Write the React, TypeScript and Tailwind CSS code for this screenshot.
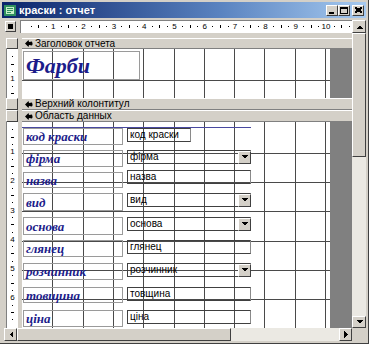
import React from 'react';

const CM = 30.3;
const ROW = 29.2;

type Ctl = { label: string; field: string; top: number; h: number; ttop: number; combo?: boolean; short?: boolean };

const controls: Ctl[] = [
  { label: 'код краски', field: 'код краски', top: 6, h: 17, ttop: 6, short: true },
  { label: 'фірма', field: 'фірма', top: 28, h: 17, ttop: 28, combo: true },
  { label: 'назва', field: 'назва', top: 50, h: 16, ttop: 48 },
  { label: 'вид', field: 'вид', top: 71, h: 18, ttop: 71, combo: true },
  { label: 'основа', field: 'основа', top: 95, h: 18, ttop: 95, combo: true },
  { label: 'глянец', field: 'глянец', top: 118, h: 17, ttop: 118 },
  { label: 'розчинник', field: 'розчинник', top: 141, h: 17, ttop: 141, combo: true },
  { label: 'товщина', field: 'товщина', top: 165, h: 16, ttop: 165 },
  { label: 'ціна', field: 'ціна', top: 188, h: 17, ttop: 188 },
];

const raised =
  'bg-[#d4d0c8] border-t border-l border-r border-b border-t-white border-l-white border-r-[#404040] border-b-[#404040]';

function Tri({ dir }: { dir: 'up' | 'down' | 'left' | 'right' }) {
  const pts = {
    up: '0,4 3.5,0.5 7,4',
    down: '0,0 7,0 3.5,3.5',
    left: '4,0 4,7 0.5,3.5',
    right: '0,0 0,7 3.5,3.5',
  }[dir];
  const vertical = dir === 'up' || dir === 'down';
  return (
    <svg width={vertical ? 7 : 4} height={vertical ? 4 : 7} shapeRendering="crispEdges">
      <polygon points={pts} fill="#000" />
    </svg>
  );
}

function ArrowBtn({ dir, className }: { dir: 'up' | 'down' | 'left' | 'right'; className: string }) {
  return (
    <div className={`${raised} flex items-center justify-center box-border ${className}`}>
      <Tri dir={dir} />
    </div>
  );
}

function CaptionBtn({ kind }: { kind: 'min' | 'max' | 'close' }) {
  return (
    <div className={`${raised} w-[12px] h-[11px] box-border flex items-center justify-center`}>
      {kind === 'min' && <div className="w-[5px] h-[2px] bg-black mt-[5px] -ml-[2px]" />}
      {kind === 'max' && <div className="w-[8px] h-[7px] border border-black border-t-2 box-border" />}
      {kind === 'close' && (
        <svg width="7" height="6" shapeRendering="crispEdges">
          <path d="M0 0 L7 6 M1 0 L7 5 M0 1 L6 6 M7 0 L0 6 M6 0 L0 5 M7 1 L1 6" stroke="#000" strokeWidth="1" fill="none" />
        </svg>
      )}
    </div>
  );
}

function TitleBar() {
  return (
    <div className="h-[16px] flex items-center bg-[linear-gradient(to_right,#0a246a,#5a83c0_60%,#a6caf0)] pl-[2px] pr-[2px]">
      <svg width="12" height="11" className="shrink-0">
        <rect x="0" y="0" width="12" height="11" fill="#2f8f5f" />
        <rect x="2" y="2" width="8" height="7" fill="#c8f0c8" />
        <rect x="3" y="3" width="6" height="1" fill="#2f8f5f" />
        <rect x="3" y="5" width="6" height="1" fill="#2f8f5f" />
        <rect x="3" y="7" width="4" height="1" fill="#2f8f5f" />
      </svg>
      <span className="ml-[3px] text-white font-bold text-[11px] leading-none font-['Liberation_Sans',Arial,sans-serif] whitespace-nowrap">
        краски : отчет
      </span>
      <div className="ml-auto flex items-center">
        <CaptionBtn kind="min" />
        <CaptionBtn kind="max" />
        <div className="w-[2px]" />
        <CaptionBtn kind="close" />
      </div>
    </div>
  );
}

function HRuler() {
  const items: React.ReactNode[] = [];
  for (let i = 0; i <= 10; i++) {
    const x = 2 + i * CM;
    if (i > 0)
      items.push(
        <span key={'n' + i} className="absolute top-[1px] -translate-x-1/2 text-[8px] leading-[9px]" style={{ left: x }}>
          {i}
        </span>
      );
    items.push(<span key={'a' + i} className="absolute top-[5px] w-[1px] h-[1px] bg-black" style={{ left: Math.round(x + CM * 0.25) }} />);
    items.push(<span key={'b' + i} className="absolute top-[4px] w-[1px] h-[3px] bg-black" style={{ left: Math.round(x + CM * 0.5) }} />);
    items.push(<span key={'c' + i} className="absolute top-[5px] w-[1px] h-[1px] bg-black" style={{ left: Math.round(x + CM * 0.75) }} />);
  }
  return (
    <div className="relative flex-1 h-[13px] bg-white border-t border-l border-[#808080] overflow-hidden font-['Liberation_Sans',Arial,sans-serif] text-black">
      {items}
    </div>
  );
}

function VRuler({ h, px, count }: { h: string; px: number; count: number }) {
  const items: React.ReactNode[] = [];
  for (let i = 0; i <= count; i++) {
    const y = i * ROW;
    if (i > 0 && y + 5 < px)
      items.push(
        <span key={'n' + i} className="absolute left-0 right-0 text-center -translate-y-1/2 text-[8px] leading-[9px]" style={{ top: y }}>
          {i}
        </span>
      );
    items.push(<span key={'a' + i} className="absolute left-[5px] w-[1px] h-[1px] bg-black" style={{ top: Math.round(y + ROW * 0.25) }} />);
    items.push(<span key={'b' + i} className="absolute left-[4px] w-[3px] h-[1px] bg-black" style={{ top: Math.round(y + ROW * 0.5) }} />);
    items.push(<span key={'c' + i} className="absolute left-[5px] w-[1px] h-[1px] bg-black" style={{ top: Math.round(y + ROW * 0.75) }} />);
  }
  return (
    <div className={`relative ${h} ml-[2px] w-[12px] bg-white border-l border-[#808080] overflow-hidden font-['Liberation_Sans',Arial,sans-serif] text-black`}>
      {items}
    </div>
  );
}

function Selector({ h }: { h: string }) {
  return <div className={`${raised} ${h} ml-[2px] w-[12px] box-border`} />;
}

function SectionBar({ title, h }: { title: string; h: string }) {
  return (
    <div className={`${h} box-border flex items-center bg-[#d4d0c8] border-t border-t-white border-b border-b-[#808080] pl-[3px]`}>
      <svg width="8" height="7" className="shrink-0">
        <path d="M0 3.5 L3.5 0 L4 2 L7 1.5 Q8 3.5 7 5.5 L4 5 L3.5 7 Z" fill="#000" />
      </svg>
      <span className="ml-[2px] text-[10px] leading-none text-black font-['Liberation_Sans',Arial,sans-serif] whitespace-nowrap">
        {title}
      </span>
    </div>
  );
}

function Grid({ height, rows }: { height: number; rows: number }) {
  const lines: React.ReactNode[] = [];
  for (let k = 1; k <= 10; k++) {
    lines.push(<div key={'v' + k} className="absolute top-0 bottom-0 w-[1px] bg-[#4a4a4a]" style={{ left: Math.round(k * CM) }} />);
  }
  for (let j = 0; j < rows; j++) {
    const t = Math.round(31 + j * ROW);
    if (t < height) lines.push(<div key={'h' + j} className="absolute left-0 right-0 h-[1px] bg-[#4a4a4a]" style={{ top: t }} />);
  }
  return <>{lines}</>;
}

function Label({ c }: { c: Ctl }) {
  return (
    <div
      className="absolute left-[1px] w-[100px] box-border border border-[#9a9a9a] flex items-center pl-[2px] text-[13px] leading-none font-bold italic text-[#1c1c8a] font-['Liberation_Serif','Times_New_Roman',serif] whitespace-nowrap"
      style={{ top: c.top, height: c.h }}
    >
      {c.label}
    </div>
  );
}

function Field({ c }: { c: Ctl }) {
  return (
    <div
      className={`absolute left-[105px] h-[14px] box-border border-t border-l border-b border-r border-t-[#404040] border-l-[#404040] border-b-[#404040] border-r-[#8a8a8a] flex items-center ${c.short ? 'w-[64px]' : 'w-[124px]'}`}
      style={{ top: c.ttop }}
    >
      <span className="pl-[2px] text-[10px] leading-none text-black font-['Liberation_Sans',Arial,sans-serif] whitespace-nowrap">
        {c.field}
      </span>
      {c.combo && <ArrowBtn dir="down" className="ml-auto w-[13px] h-[13px] -mr-[1px]" />}
    </div>
  );
}

export default function App() {
  return (
    <div className="w-[369px] h-[344px] box-border bg-[#d4d0c8] border-r border-b border-[#404040] pt-[2px] pl-[2px] pr-[2px] pb-[2px] flex flex-col">
      <TitleBar />
      <div className="h-[2px]" />

      <div className="h-[308px] flex pl-[2px]">
        <div className="flex-1 flex flex-col">
          {/* top ruler */}
          <div className="h-[13px] flex">
            <div className="w-[16px] flex">
              <div className={`${raised} ml-[1px] mt-[1px] w-[11px] h-[11px] box-border flex items-center justify-center`}>
                <div className="w-[5px] h-[5px] bg-black" />
              </div>
            </div>
            <HRuler />
          </div>
          <div className="h-[5px]" />

          {/* sections */}
          <div className="flex-1 flex">
            <div className="w-[18px] flex flex-col">
              <Selector h="h-[11px]" />
              <VRuler h="h-[49px]" px={49} count={1} />
              <Selector h="h-[12px]" />
              <Selector h="h-[12px]" />
              <VRuler h="h-[206px]" px={206} count={7} />
            </div>

            <div className="w-[330px] flex flex-col">
              <SectionBar title="Заголовок отчета" h="h-[11px]" />
              <div className="h-[49px] flex">
                <div className="relative w-[308px] bg-white overflow-hidden">
                  <Grid height={49} rows={1} />
                  <div className="absolute left-[1px] top-[2px] w-[117px] h-[29px] box-border border border-[#9a9a9a] flex items-center pl-[2px] text-[22px] leading-none font-bold italic text-[#1c1c8a] font-['Liberation_Serif','Times_New_Roman',serif]">
                    Фарби
                  </div>
                </div>
                <div className="flex-1 bg-[#808080]" />
              </div>
              <SectionBar title="Верхний колонтитул" h="h-[12px]" />
              <SectionBar title="Область данных" h="h-[12px]" />
              <div className="h-[206px] flex">
                <div className="relative w-[308px] bg-white overflow-hidden">
                  <Grid height={206} rows={7} />
                  <div className="absolute left-0 top-[5px] w-[229px] h-[1px] bg-[#4848a0]" />
                  {controls.map((c) => (
                    <React.Fragment key={c.label}>
                      <Label c={c} />
                      <Field c={c} />
                    </React.Fragment>
                  ))}
                </div>
                <div className="flex-1 bg-[#808080]" />
              </div>
            </div>
          </div>
        </div>

        {/* vertical scrollbar */}
        <div className="w-[14px] flex flex-col bg-[#ebe9e3]">
          <ArrowBtn dir="up" className="w-[14px] h-[13px]" />
          <div className={`${raised} w-[14px] h-[124px] box-border`} />
          <div className="flex-1" />
          <ArrowBtn dir="down" className="w-[14px] h-[12px]" />
        </div>
      </div>

      {/* horizontal scrollbar */}
      <div className="h-[13px] flex pl-[2px]">
        <div className="flex-1 flex bg-[#ebe9e3]">
          <ArrowBtn dir="left" className="w-[13px] h-[13px]" />
          <div className={`${raised} w-[214px] h-[13px] box-border`} />
          <div className="flex-1" />
          <ArrowBtn dir="right" className="w-[13px] h-[13px]" />
        </div>
        <div className="w-[14px] bg-[#d4d0c8]" />
      </div>
    </div>
  );
}
